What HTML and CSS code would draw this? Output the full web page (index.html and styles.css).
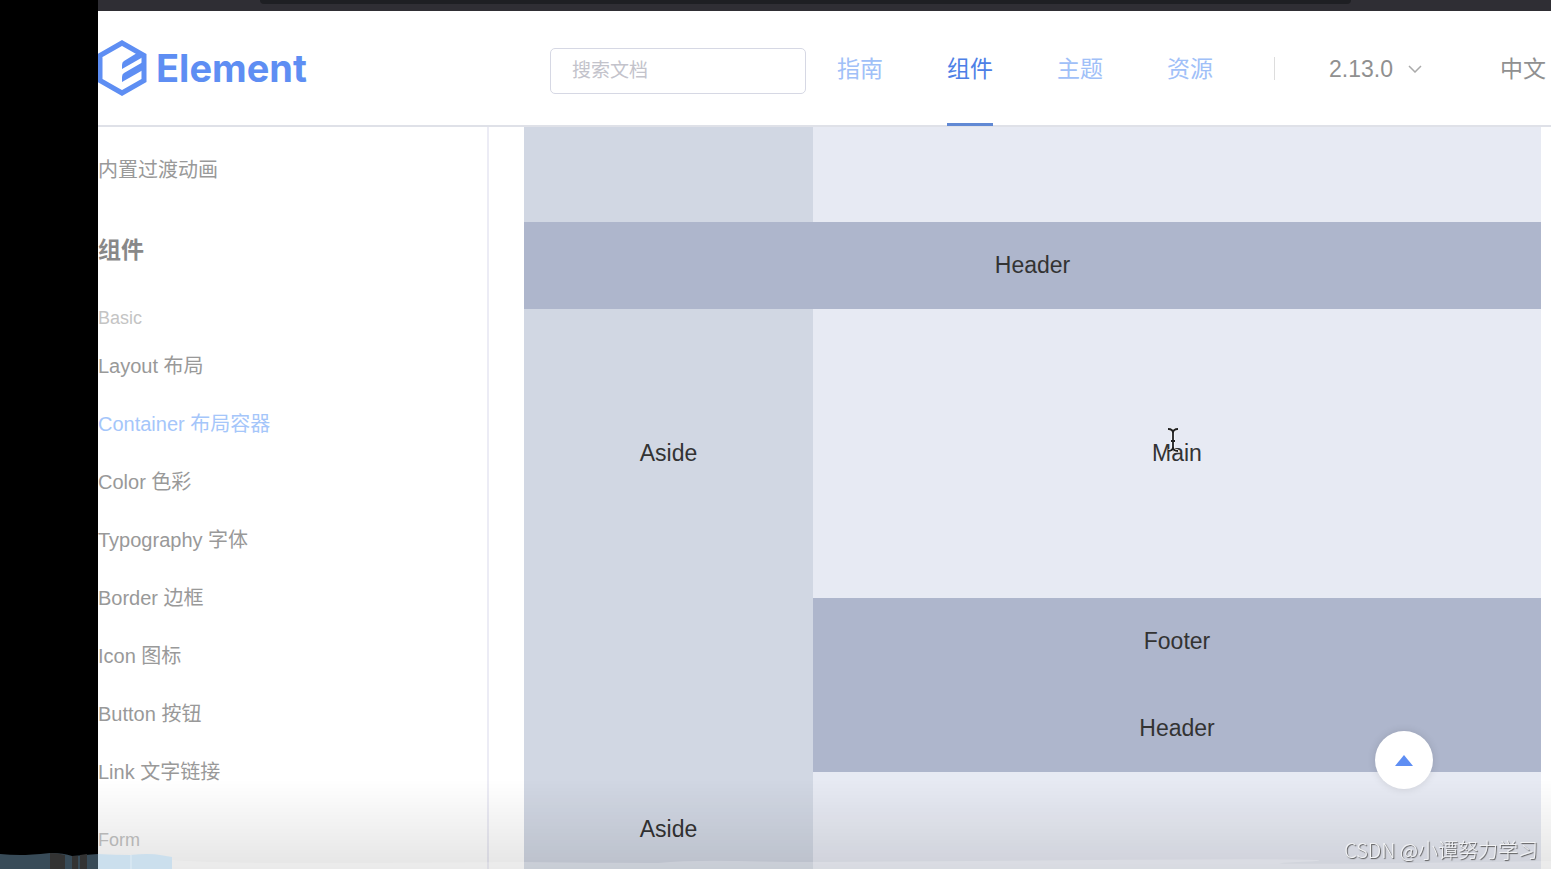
FILE: index.html
```html
<!DOCTYPE html>
<html lang="zh-CN">
<head>
    <meta charset="UTF-8">
    <meta name="viewport" content="width=device-width, initial-scale=1.0">
    <title>Element - Container 布局容器</title>
    <link rel="stylesheet" href="styles.css">
</head>
<body>
    <div class="page">
        <div class="browser-bar">
            <div class="browser-tab"></div>
        </div>

        <header class="site-header">
            <a class="logo" href="#">
                <svg class="logo-mark" viewBox="0 0 49 56" aria-hidden="true">
                    <path d="M24 3 L46 15.500 V40.500 L24 53 L2 40.500 V15.500 Z" fill="none" stroke="#5e8ef3" stroke-width="5"/>
                    <path d="M24 25 Q24 22 26 21 L39 13 L45 12 V17 L24 29 Z M24 37 Q24 34 26 33 L45 22 V30 L24 42 Z" fill="#5e8ef3"/>
                </svg>
                <span class="logo-text">Element</span>
            </a>

            <input class="search" type="text" placeholder="搜索文档" aria-label="搜索文档">

            <nav class="nav">
                <a class="nav-item" href="#">指南</a>
                <a class="nav-item active" href="#">组件</a>
                <a class="nav-item" href="#">主题</a>
                <a class="nav-item" href="#">资源</a>
            </nav>

            <span class="divider"></span>

            <button class="dropdown version" type="button">
                2.13.0
                <svg class="chevron" viewBox="0 0 14 8" aria-hidden="true">
                    <path d="M1 1 L7 7 L13 1" fill="none" stroke="#aaa" stroke-width="1.500"/>
                </svg>
            </button>
            <button class="dropdown" type="button">中文</button>
        </header>

        <div class="body-row">
            <aside class="side-nav">
                <a class="side-link" href="#">内置过渡动画</a>
                <h2 class="side-title">组件</h2>

                <div class="side-group">Basic</div>
                <a class="side-link" href="#">Layout 布局</a>
                <a class="side-link active" href="#">Container 布局容器</a>
                <a class="side-link" href="#">Color 色彩</a>
                <a class="side-link" href="#">Typography 字体</a>
                <a class="side-link" href="#">Border 边框</a>
                <a class="side-link" href="#">Icon 图标</a>
                <a class="side-link" href="#">Button 按钮</a>
                <a class="side-link" href="#">Link 文字链接</a>

                <div class="side-group">Form</div>
            </aside>

            <main class="content">
                <!-- 上一个示例的底部 -->
                <section class="el-container demo-tail">
                    <div class="el-aside"></div>
                    <div class="el-main"></div>
                </section>

                <section class="el-container vertical">
                    <div class="el-header">Header</div>
                    <div class="el-container">
                        <div class="el-aside">Aside</div>
                        <div class="el-container vertical">
                            <div class="el-main">Main</div>
                            <div class="el-footer">Footer</div>
                        </div>
                    </div>
                </section>

                <section class="el-container">
                    <div class="el-aside">Aside</div>
                    <div class="el-container vertical">
                        <div class="el-header">Header</div>
                        <div class="el-main"></div>
                    </div>
                </section>
            </main>
        </div>
    </div>

    <div class="bottom-shade"></div>

    <svg class="bottom-wave" viewBox="0 0 1453 10" preserveAspectRatio="none" aria-hidden="true">
        <path d="M74 1 Q110 4 190 4 T426 3 Q500 4 560 4 Q590 1 640 2 T700 3 T1000 1 T1200 3 T1453 2 V10 H74 Z" fill="#fff" fill-opacity="0.2"/>
    </svg>

    <svg class="bottom-dock" viewBox="0 0 172 16" aria-hidden="true">
        <path d="M0 1 Q10 2 20 2 T50 0 Q64 0 72 3 L98 1 V16 H0 Z" fill="#384b58"/>
        <path d="M50 0 Q58 0 65 2 V16 H50 Z M72 3 H78 V16 H72 Z M80 2 L87 1 V16 H80 Z" fill="#333"/>
        <path d="M98 1 Q115 2 130 2 Q150 0 160 2 L172 4 V16 H98 Z" fill="#cbdfed"/>
        <path d="M131 2 V16" stroke="#e0edf6" stroke-width="1"/>
    </svg>

    <button class="back-top" type="button" aria-label="返回顶部">
        <svg viewBox="0 0 18 11" aria-hidden="true">
            <path d="M9 0 L18 11 H0 Z" fill="#5e8ef3"/>
        </svg>
    </button>

    <svg class="text-cursor" viewBox="0 0 12 24" aria-hidden="true">
        <path d="M1 1 Q6 1 6 5 Q6 1 11 1 M6 4 V20 M1 23 Q6 23 6 19 Q6 23 11 23 M4 13 H8" fill="none" stroke="#fff" stroke-width="3"/>
        <path d="M1 1 Q6 1 6 5 Q6 1 11 1 M6 4 V20 M1 23 Q6 23 6 19 Q6 23 11 23 M4 13 H8" fill="none" stroke="#222" stroke-width="1.800"/>
    </svg>

    <div class="watermark">CSDN @小谭努力学习</div>
</body>
</html>
```
FILE: styles.css
```css
* {
    margin: 0;
    padding: 0;
    box-sizing: border-box;
}

body {
    font-family: "Liberation Sans", "Noto Sans CJK SC", sans-serif;
    background: #000;
    color: #333;
    height: 100vh;
    padding-left: 98px;
    overflow: hidden;
}

a {
    text-decoration: none;
}

button {
    font-family: inherit;
    border: none;
    background: none;
    cursor: pointer;
}

.page {
    display: flex;
    flex-direction: column;
    height: 100%;
    background: #fff;
}

/* 浏览器边框 */
.browser-bar {
    flex: none;
    height: 11px;
    padding: 0 200px 0 162px;
    background: #2f2e34;
}

.browser-tab {
    height: 4px;
    background: #1e1f23;
    border-radius: 0 0 8px 8px;
}

/* 顶部导航 */
.site-header {
    flex: none;
    display: flex;
    align-items: center;
    height: 116px;
    padding-right: 5px;
    border-bottom: 2px solid #dfe1e8;
}

.logo {
    display: flex;
    align-items: center;
    gap: 9px;
    margin-right: auto;
}

.logo-mark {
    width: 49px;
    height: 56px;
}

.logo-text {
    font-family: Inter, sans-serif;
    font-size: 38px;
    font-weight: 700;
    line-height: 56px;
    color: #5e8ef3;
}

.search {
    width: 256px;
    height: 46px;
    margin: 6px 31px 0 0;
    padding: 0 21px;
    border: 1px solid #d6d8e4;
    border-radius: 5px;
    font-family: inherit;
    font-size: 19px;
    background: #fff;
}

.search::placeholder {
    color: #c3c3cb;
}

.nav {
    display: flex;
    gap: 64px;
    height: 116px;
    margin-right: 61px;
}

.nav-item {
    font-size: 23px;
    line-height: 118px;
    height: 116px;
    color: #a0c0f8;
}

.nav-item.active {
    color: #4d80e6;
    border-bottom: 3px solid #6189d4;
}

.divider {
    width: 1px;
    height: 23px;
    margin-right: 54px;
    background: #ddd;
}

.dropdown {
    display: flex;
    align-items: center;
    padding-top: 2px;
    font-size: 23px;
    line-height: 34px;
    color: #909090;
}

.version {
    gap: 15px;
    margin-right: 78px;
}

.chevron {
    width: 14px;
    height: 8px;
}

.body-row {
    flex: 1;
    display: flex;
    min-height: 0;
    overflow: hidden;
}

/* 侧边栏 */
.side-nav {
    flex: none;
    width: 391px;
    padding-top: 14px;
    border-right: 2px solid #ececf5;
}

.side-link {
    display: block;
    font-size: 20px;
    line-height: 58px;
    color: #999;
}

.side-link.active {
    color: #a5c6fa;
}

.side-title {
    margin-top: 22px;
    font-size: 23px;
    line-height: 58px;
    font-weight: 700;
    color: #888;
}

.side-group {
    margin-top: 20px;
    font-size: 18px;
    line-height: 38px;
    color: #c4c4c4;
}

/* 布局容器示例 */
.content {
    flex: 1;
    min-width: 0;
    padding: 0 10px 0 35px;
}

.el-container {
    display: flex;
    flex: 1;
    min-width: 0;
    font-size: 23px;
    text-align: center;
}

.el-container.vertical {
    flex-direction: column;
}

.el-header,
.el-footer {
    line-height: 87px;
    background: #aeb6cc;
}

.el-aside {
    flex: none;
    width: 289px;
    line-height: 289px;
    background: #d1d7e3;
}

.el-main {
    flex: 1;
    min-height: 289px;
    line-height: 289px;
    background: #e7eaf3;
}

.demo-tail {
    height: 95px;
}

.demo-tail .el-main {
    min-height: 0;
}

/* 悬浮层 */
.bottom-shade {
    position: fixed;
    left: 98px;
    right: 0;
    bottom: 0;
    height: 90px;
    background: linear-gradient(rgba(0, 0, 0, 0), rgba(0, 0, 0, 0.1));
}

.bottom-wave {
    position: fixed;
    left: 98px;
    bottom: 0;
    width: calc(100% - 98px);
    height: 10px;
}

.bottom-dock {
    position: fixed;
    left: 0;
    bottom: 0;
    width: 172px;
    height: 16px;
}

.back-top {
    position: fixed;
    right: 118px;
    bottom: 80px;
    display: flex;
    align-items: center;
    justify-content: center;
    width: 58px;
    height: 58px;
    border-radius: 50%;
    background: #fff;
    box-shadow: 0 0 8px rgba(0, 0, 0, 0.12);
}

.back-top svg {
    width: 18px;
    height: 11px;
}

.text-cursor {
    position: fixed;
    left: 1167px;
    top: 428px;
    width: 12px;
    height: 24px;
}

.watermark {
    position: fixed;
    right: 13px;
    bottom: 4px;
    font-family: "Noto Sans CJK SC", sans-serif;
    font-size: 20px;
    font-weight: 300;
    line-height: 30px;
    color: #f2f3f5;
    text-shadow: 1px 1px 1px #555;
}
```
